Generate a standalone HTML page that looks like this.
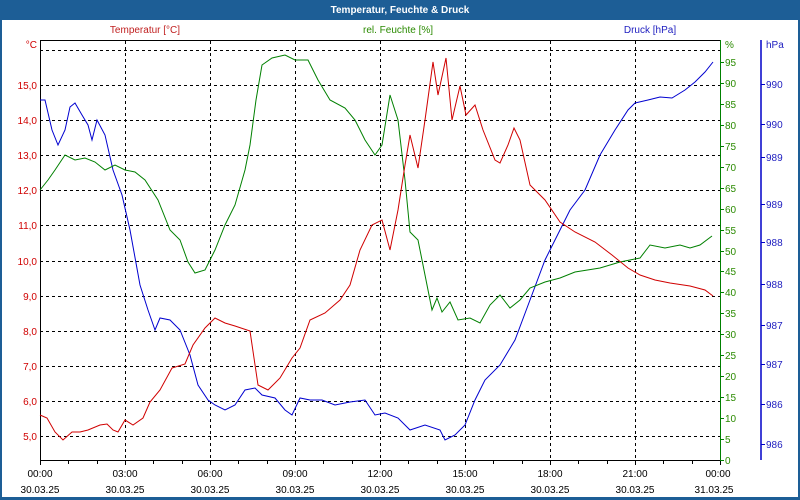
<!DOCTYPE html>
<html><head><meta charset="utf-8"><style>
html,body{margin:0;padding:0;background:#fff}
svg{display:block}
text{font-family:"Liberation Sans",sans-serif;font-size:10px}
</style></head><body>
<svg width="800" height="500" xmlns="http://www.w3.org/2000/svg">
<rect x="0" y="0" width="800" height="500" fill="#1d5e96"/>
<rect x="2" y="20" width="796" height="477" fill="#fff"/>
<text x="400" y="13" fill="#fff" font-weight="bold" font-size="11" text-anchor="middle">Temperatur, Feuchte &amp; Druck</text>
<text x="145" y="33" fill="#c02020" text-anchor="middle">Temperatur [°C]</text>
<text x="398" y="33" fill="#2a8a00" text-anchor="middle">rel. Feuchte [%]</text>
<text x="650" y="33" fill="#2020c0" text-anchor="middle">Druck [hPa]</text>
<g stroke="#000" stroke-dasharray="3,3" stroke-width="1">
<path d="M125.5 41V460M210.5 41V460M295.5 41V460M380.5 41V460M465.5 41V460M550.5 41V460M635.5 41V460"/>
<path d="M40 50.5H720M40 85.5H720M40 120.5H720M40 155.5H720M40 190.5H720M40 225.5H720M40 261.5H720M40 296.5H720M40 331.5H720M40 366.5H720M40 401.5H720M40 436.5H720"/>
</g>
<path d="M40.5 460V40.5H720" stroke="#000" fill="none"/>
<path d="M40 460.5H720" stroke="#000"/>
<g stroke="#000"><path d="M40.5 460v5M68.5 460v4M97.5 460v4M125.5 460v5M153.5 460v4M182.5 460v4M210.5 460v5M238.5 460v4M267.5 460v4M295.5 460v5M323.5 460v4M352.5 460v4M380.5 460v5M408.5 460v4M437.5 460v4M465.5 460v5M493.5 460v4M522.5 460v4M550.5 460v5M578.5 460v4M607.5 460v4M635.5 460v5M663.5 460v4M692.5 460v4M720.5 460v5"/></g>
<path d="M720.5 40V461" stroke="#008000"/>
<path d="M761 40V460" stroke="#0000c8" stroke-width="1.5"/>
<g fill="#d00000" text-anchor="end">
<text x="37" y="48">°C</text>
<text x="37" y="89">15,0</text><text x="37" y="124">14,0</text><text x="37" y="159">13,0</text><text x="37" y="194">12,0</text><text x="37" y="229">11,0</text><text x="37" y="265">10,0</text><text x="37" y="300">9,0</text><text x="37" y="335">8,0</text><text x="37" y="370">7,0</text><text x="37" y="405">6,0</text><text x="37" y="440">5,0</text>
</g>
<g fill="#2a8a00">
<text x="725" y="48">%</text>
<text x="725" y="66">95</text><text x="725" y="87">90</text><text x="725" y="108">85</text><text x="725" y="129">80</text><text x="725" y="150">75</text><text x="725" y="171">70</text><text x="725" y="192">65</text><text x="725" y="213">60</text><text x="725" y="234">55</text><text x="725" y="255">50</text><text x="725" y="275">45</text><text x="725" y="296">40</text><text x="725" y="317">35</text><text x="725" y="338">30</text><text x="725" y="359">25</text><text x="725" y="380">20</text><text x="725" y="401">15</text><text x="725" y="422">10</text><text x="725" y="443">5</text><text x="725" y="464">0</text>
</g>
<g stroke="#008000"><path d="M720 62.5h4M720 83.5h4M720 104.5h4M720 125.5h4M720 146.5h4M720 167.5h4M720 188.5h4M720 209.5h4M720 230.5h4M720 251.5h4M720 271.5h4M720 292.5h4M720 313.5h4M720 334.5h4M720 355.5h4M720 376.5h4M720 397.5h4M720 418.5h4M720 439.5h4M720 460.5h4"/></g>
<g fill="#2020c0">
<text x="766" y="48">hPa</text>
<text x="766" y="88">990</text><text x="766" y="128">990</text><text x="766" y="161">989</text><text x="766" y="208">989</text><text x="766" y="246">988</text><text x="766" y="288">988</text><text x="766" y="329">987</text><text x="766" y="368">987</text><text x="766" y="408">986</text><text x="766" y="448">986</text>
</g>
<g stroke="#0000c8"><path d="M761 84.5h4M761 124.5h4M761 157.5h4M761 204.5h4M761 242.5h4M761 284.5h4M761 325.5h4M761 364.5h4M761 404.5h4M761 444.5h4"/></g>
<g fill="#000" text-anchor="middle">
<text x="40" y="477">00:00</text><text x="125" y="477">03:00</text><text x="210" y="477">06:00</text><text x="295" y="477">09:00</text><text x="380" y="477">12:00</text><text x="465" y="477">15:00</text><text x="550" y="477">18:00</text><text x="635" y="477">21:00</text><text x="718" y="477">00:00</text>
<text x="40" y="493">30.03.25</text><text x="125" y="493">30.03.25</text><text x="210" y="493">30.03.25</text><text x="295" y="493">30.03.25</text><text x="380" y="493">30.03.25</text><text x="465" y="493">30.03.25</text><text x="550" y="493">30.03.25</text><text x="635" y="493">30.03.25</text><text x="714" y="493">31.03.25</text>
</g>
<polyline fill="none" stroke="#0000d0" points="40,100 45,100 52,130 58,145 65,130 70,107 75,103 82,115 88,125 92,140 97,120 105,135 113,170 122,195 130,230 140,285 148,310 155,330 160,318 170,320 180,330 190,355 198,385 208,400 215,405 225,410 235,405 245,390 255,388 262,395 275,398 285,410 292,415 300,398 310,400 322,400 335,405 350,402 365,400 375,415 385,413 398,418 410,430 425,425 440,430 445,440 455,435 465,425 475,400 485,380 500,365 515,340 530,300 545,260 560,230 570,210 585,190 600,155 615,130 628,110 635,103 648,100 660,97 672,98 685,90 695,82 705,72 713,62"/>
<polyline fill="none" stroke="#008000" points="40,190 48,180 55,170 65,155 75,160 85,158 95,162 105,170 115,165 125,170 135,172 145,180 158,200 170,230 180,240 188,262 195,273 205,270 215,250 225,225 235,205 245,170 250,145 256,100 262,65 272,58 285,55 295,60 308,60 318,80 330,100 345,108 355,120 365,140 375,155 382,145 390,95 398,120 405,180 410,232 418,240 425,275 432,310 437,298 442,312 450,302 458,320 470,318 480,323 490,305 500,295 510,308 520,300 530,288 545,282 560,278 575,272 600,268 620,262 640,258 650,245 665,248 680,245 690,248 700,245 712,236"/>
<polyline fill="none" stroke="#d00000" points="40,415 47,418 55,432 63,440 72,432 80,432 88,430 100,425 107,424 113,430 118,432 125,420 133,425 143,418 150,402 160,390 172,368 185,364 193,345 205,328 215,318 225,323 235,326 250,331 258,385 268,390 280,378 292,358 300,348 310,320 325,313 340,300 350,285 360,250 372,225 382,220 390,250 398,210 405,165 410,135 418,168 425,120 433,62 438,95 446,58 452,120 460,86 466,115 475,105 483,130 495,160 500,163 508,145 514,128 520,140 530,185 545,200 560,222 575,232 595,242 612,255 628,268 640,275 655,280 670,283 690,286 705,290 713,296"/>
</svg>
</body></html>
